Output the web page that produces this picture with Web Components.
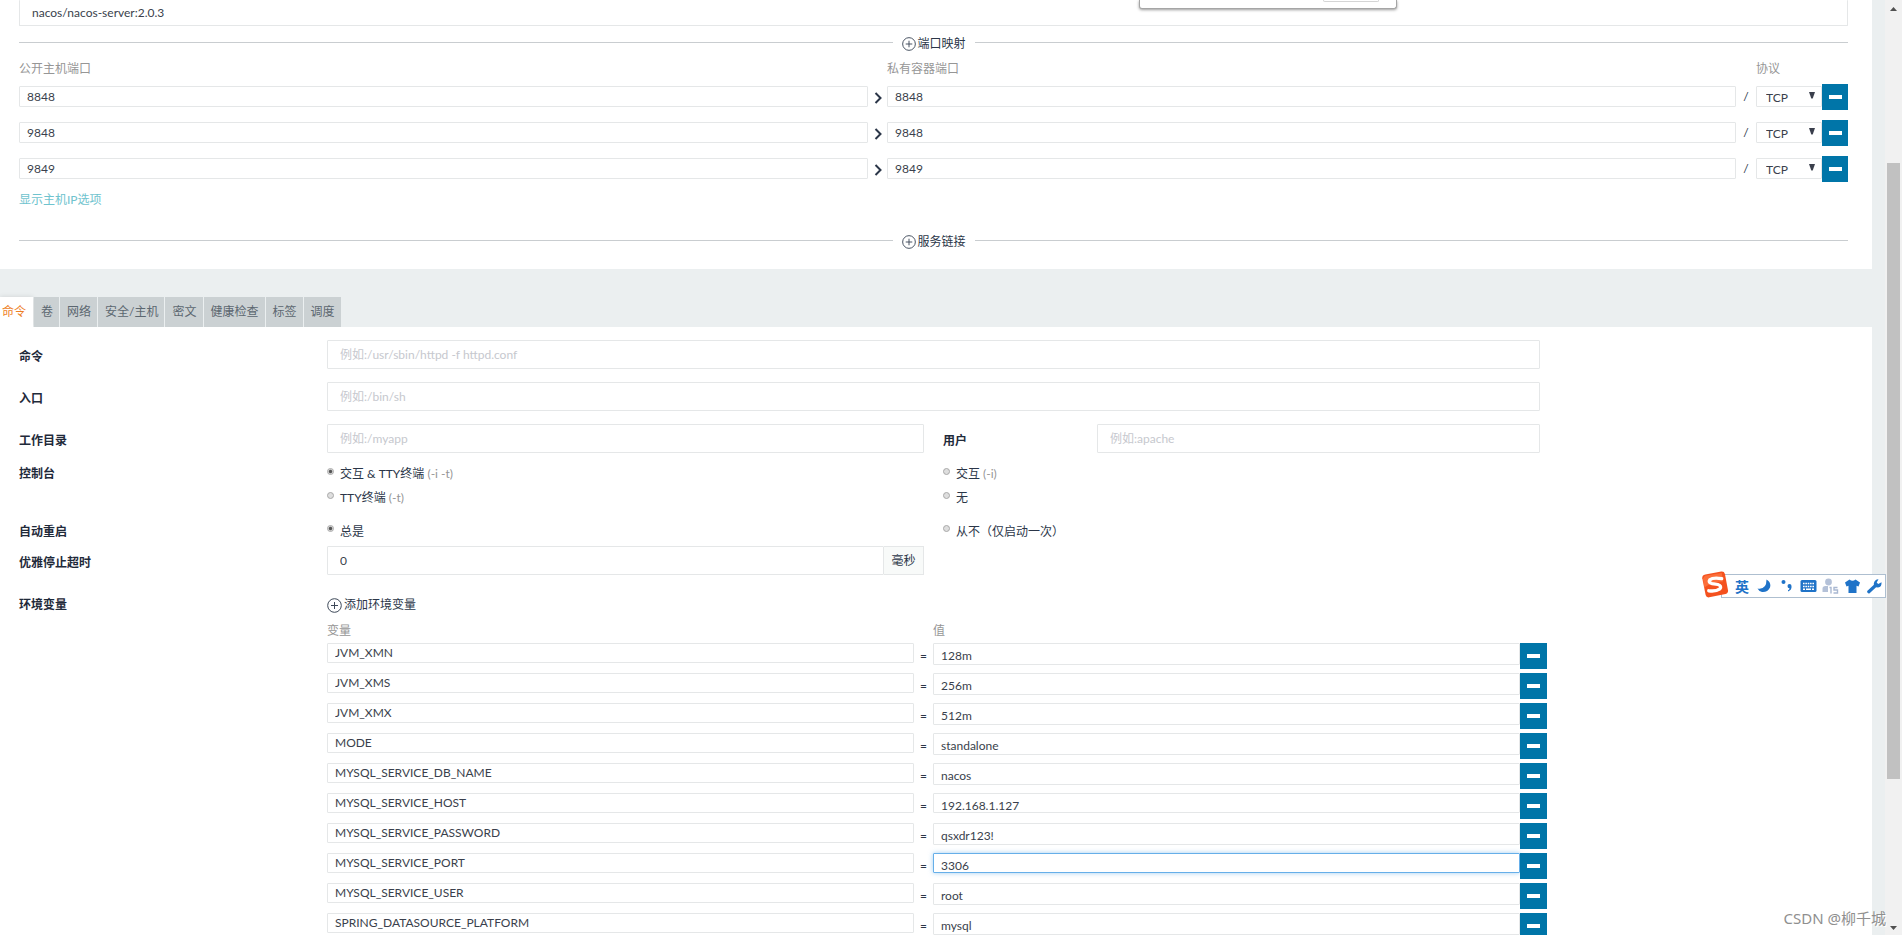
<!DOCTYPE html>
<html lang="zh-CN">
<head>
<meta charset="utf-8">
<title>nacos-server</title>
<style>
  html, body { margin: 0; height: 100%; }
  body {
    overflow: hidden;
    background: #ebeff0;
    color: #2b3648;
    font: 12px/18px Lato, "Noto Sans CJK SC", sans-serif;
    --line: #e5e7e8;
    --muted: #969696;
    --primary: #0075a8;
  }
</style>
</head>
<body>
<app-page></app-page>
<script>
const base = `
  *, *::before, *::after { box-sizing: border-box; }
  :host { display: block; box-sizing: border-box; }
  :host([hidden]) { display: none; }
  input, textarea, select, button { font: inherit; color: inherit; margin: 0; border-radius: 0; outline: none; }
  input[type=text], textarea {
    display: block; width: 100%; min-width: 0; background: #fff;
    border: 1px solid var(--line); border-radius: 1px; color: #3a3f4c; resize: none; overflow: hidden;
  }
  ::placeholder { color: #c6c8ce; opacity: 1; }
`;

function define(name, css, html, setup) {
  const tpl = document.createElement('template');
  customElements.define(name, class extends HTMLElement {
    constructor() {
      super();
      this.attachShadow({ mode: 'open' });
    }
    connectedCallback() {
      if (this.shadowRoot.childNodes.length) return;
      tpl.innerHTML = `<style>${base}${css}</style>${typeof html === 'function' ? html(this) : html}`;
      this.shadowRoot.append(tpl.content.cloneNode(true));
      if (setup) setup(this, this.shadowRoot);
    }
  });
}

/* Circled plus with a caption, used to add an entry */
define('add-button', `
  :host { display: inline-flex; }
  button { display: flex; align-items: center; gap: 2px; padding: 0; border: 0; background: none; line-height: 18px; white-space: nowrap; }
  svg { width: var(--icon, 14px); height: var(--icon, 14px); display: block; }
`, `
  <button type="button">
    <svg viewBox="0 0 15 15" fill="none" stroke="#3d4858" aria-hidden="true"><circle cx="7.5" cy="7.5" r="6.8"/><path d="M7.5 4v7M4 7.5h7"/></svg>
    <span><slot></slot></span>
  </button>`);

define('remove-button', `
  button { display: grid; place-items: center; width: 100%; height: 26px; padding: 0; border: 0; background: var(--primary); }
  svg { display: block; width: 13px; height: 4px; }
`, `<button type="button" aria-label="删除"><svg viewBox="0 0 13 4" aria-hidden="true"><rect width="13" height="4" fill="#fff"/></svg></button>`);

define('section-divider', `
  :host { display: flex; align-items: center; gap: 9px; height: 18px; }
  i { flex: 1; height: 1px; background: #c9cdd0; }
  add-button { padding-top: 3px; }
`, `<i></i><add-button><slot></slot></add-button><i></i>`);

/* Public port, private port and protocol */
define('port-row', `
  :host { display: grid; grid-template-columns: 1fr 19px 1fr 20px 66px 26px; height: 26px; }
  input[type=text] { height: 21px; margin-top: 2px; padding: 0 7px; }
  .mark { display: grid; place-items: center; }
  .mark svg { display: block; width: 10px; height: 14px; }
  .chevron { padding-top: 2px; }
  .slash { height: 25px; }
  .proto { position: relative; height: 21px; margin-top: 2px; }
  select {
    appearance: none; display: block; width: 100%; height: 21px; padding: 2px 9px 4px;
    background: #fff; border: 1px solid var(--line); border-radius: 1px; color: #3a3f4c; line-height: 18px;
  }
  .proto svg { position: absolute; right: 7px; top: 6px; width: 6px; height: 7px; pointer-events: none; }
`, host => `
  <input type="text" aria-label="公开主机端口" value="${host.getAttribute('public')}">
  <span class="mark chevron"><svg viewBox="0 0 10 14" fill="none" stroke="#2b3648" stroke-width="2" aria-hidden="true"><path d="M2.5 2l5 5-5 5"/></svg></span>
  <input type="text" aria-label="私有容器端口" value="${host.getAttribute('private')}">
  <span class="mark slash">/</span>
  <span class="proto">
    <select aria-label="协议"><option>TCP</option><option>UDP</option></select>
    <svg viewBox="0 0 6 7" aria-hidden="true"><path d="M0 0h6L3.700 6.500H2.300z" fill="#3a3f4c"/></svg>
  </span>
  <remove-button></remove-button>`);

define('port-panel', `
  :host { background: #fff; padding: 0 24px 20px 19px; }
  .image { height: 26px; padding: 0 12px; border-top: 0 !important; }
  .first { margin-top: 7px; }
  .heads { display: grid; grid-template-columns: 1fr 19px 1fr 20px 92px; margin-top: 9px; color: var(--muted); }
  .heads span:nth-child(2) { grid-column: 3; }
  .heads span:nth-child(3) { grid-column: 5; }
  .rows { display: flex; flex-direction: column; gap: 10px; margin-top: 6px; }
  a { display: block; width: max-content; margin-top: 9px; color: #6fc3ce; text-decoration: none; }
  .last { margin-top: 22px; }
`, `
  <input class="image" type="text" aria-label="镜像" value="nacos/nacos-server:2.0.3">
  <section-divider class="first">端口映射</section-divider>
  <div class="heads"><span>公开主机端口</span><span>私有容器端口</span><span>协议</span></div>
  <div class="rows">
    <port-row public="8848" private="8848"></port-row>
    <port-row public="9848" private="9848"></port-row>
    <port-row public="9849" private="9849"></port-row>
  </div>
  <a href="#host-ip">显示主机IP选项</a>
  <section-divider class="last">服务链接</section-divider>`);

define('tab-bar', `
  :host { display: flex; gap: 1px; height: 30px; }
  button { height: 30px; padding: 0 6px 0 7px; border: 0; background: #cbd1d3; color: #5c6770; white-space: nowrap; }
  button[aria-selected=true] { background: #fff; color: #ee7e24; padding: 0 7px 0 2px; box-shadow: 0 0 5px rgba(0,0,0,.12); }
`, host => host.getAttribute('tabs').split(',').map((t, i) =>
    `<button type="button" role="tab" aria-selected="${i === 0}">${t}</button>`).join(''));

/* Twelve-column row */
define('form-row', `
  :host { display: grid; grid-template-columns: repeat(12, minmax(0, 1fr)); column-gap: 19px; }
`, `<slot></slot>`);

define('env-row', `
  :host { display: grid; grid-template-columns: 1fr 19px 1fr 27px; height: 26px; }
  input[type=text] { height: 20px; padding: 0 7px 2px; }
  textarea { height: 22px; padding: 3px 7px 0; line-height: 18px; white-space: pre; }
  :host([short]) textarea { height: 20px; }
  :host([active]) textarea { border-color: #66afe9; box-shadow: 0 0 5px rgba(102,175,233,.6); }
  span { text-align: center; line-height: 25px; }
`, host => `
  <input type="text" aria-label="变量" value="${host.getAttribute('name')}">
  <span>=</span>
  <textarea rows="1" aria-label="值">${host.getAttribute('value')}</textarea>
  <remove-button></remove-button>`);

define('command-form', `
  :host { background: #fff; padding: 13px 24px 0 19px; }
  input[type=text] { height: 29px; padding: 0 12px; }
  .title { grid-column: 1 / span 2; padding-top: 8px; font-weight: 700; color: #1f2a3a; }
  .c8 { grid-column: 3 / span 8; }
  .a4 { grid-column: 3 / span 4; }
  .b4 { grid-column: 7 / span 4; }
  .b1 { grid-column: 7 / span 1; }
  .b3 { grid-column: 8 / span 3; }
  .fields { display: flex; flex-direction: column; gap: 13px; }
  .radios { margin-top: 9px; }
  .radios .title { padding-top: 3px; }
  .radios label { display: flex; align-items: flex-start; height: 24px; gap: 6px; padding-top: 3px; }
  .radios small { font-size: 12px; color: var(--muted); }
  .restart .title, .restart label { padding-top: 4px; }
  input[type=radio] {
    appearance: none; flex: none; width: 7px; height: 7px; margin-top: 3px;
    border: 1px solid #a9a9a9; border-radius: 50%; background: #dedede;
  }
  input[type=radio]:checked { background: radial-gradient(circle closest-side, #555 50%, #dedede 90%); }
  .restart input[type=radio] { margin-top: 2px; }
  .stop { margin-top: 3px; }
  .group { display: flex; }
  .group span { flex: none; width: 40px; border: 1px solid var(--line); border-left: 0; background: #f8faf9; line-height: 27px; text-align: center; }
  .env { margin-top: 21px; }
  .env .title { padding-top: 0; }
  .env add-button { --icon: 15px; display: flex; height: 18px; }
  .list { margin-right: -7px; }
  .heads { display: grid; grid-template-columns: 1fr 19px 1fr 27px; margin: 8px 0 3px; color: var(--muted); }
  .heads span + span { grid-column: 3; }
  .rows { display: flex; flex-direction: column; gap: 4px; }
`, `
  <div class="fields">
    <form-row>
      <label class="title" for="cmd">命令</label>
      <input class="c8" id="cmd" type="text" placeholder="例如:/usr/sbin/httpd -f httpd.conf">
    </form-row>
    <form-row>
      <label class="title" for="entry">入口</label>
      <input class="c8" id="entry" type="text" placeholder="例如:/bin/sh">
    </form-row>
    <form-row>
      <label class="title" for="dir">工作目录</label>
      <input class="a4" id="dir" type="text" placeholder="例如:/myapp">
      <label class="title b1" for="user">用户</label>
      <input class="b3" id="user" type="text" placeholder="例如:apache">
    </form-row>
  </div>
  <form-row class="radios">
    <span class="title">控制台</span>
    <div class="a4">
      <label><input type="radio" name="console" checked><span>交互 &amp; TTY终端 <small>(-i -t)</small></span></label>
      <label><input type="radio" name="console"><span>TTY终端 <small>(-t)</small></span></label>
    </div>
    <div class="b4">
      <label><input type="radio" name="console"><span>交互 <small>(-i)</small></span></label>
      <label><input type="radio" name="console"><span>无</span></label>
    </div>
  </form-row>
  <form-row class="radios restart">
    <span class="title">自动重启</span>
    <label class="a4"><input type="radio" name="restart" checked><span>总是</span></label>
    <label class="b4"><input type="radio" name="restart"><span>从不（仅启动一次）</span></label>
  </form-row>
  <form-row class="stop">
    <label class="title" for="timeout">优雅停止超时</label>
    <div class="a4 group"><input id="timeout" type="text" value="0"><span>毫秒</span></div>
  </form-row>
  <form-row class="env">
    <span class="title">环境变量</span>
    <div class="c8 list">
      <add-button>添加环境变量</add-button>
      <div class="heads"><span>变量</span><span>值</span></div>
      <div class="rows">
        <env-row name="JVM_XMN" value="128m"></env-row>
        <env-row name="JVM_XMS" value="256m"></env-row>
        <env-row name="JVM_XMX" value="512m"></env-row>
        <env-row name="MODE" value="standalone"></env-row>
        <env-row name="MYSQL_SERVICE_DB_NAME" value="nacos"></env-row>
        <env-row short name="MYSQL_SERVICE_HOST" value="192.168.1.127"></env-row>
        <env-row name="MYSQL_SERVICE_PASSWORD" value="qsxdr123!"></env-row>
        <env-row short active name="MYSQL_SERVICE_PORT" value="3306"></env-row>
        <env-row name="MYSQL_SERVICE_USER" value="root"></env-row>
        <env-row name="SPRING_DATASOURCE_PLATFORM" value="mysql"></env-row>
      </div>
    </div>
  </form-row>`);

define('page-scrollbar', `
  :host { display: flex; flex-direction: column; align-items: center; width: 17px; background: #f1f1f1; }
  svg { flex: none; display: block; width: 17px; height: 17px; }
  .track { flex: 1; width: 13px; display: flex; flex-direction: column; }
  .before { flex: 146; }
  .thumb { flex: 616; background: #c1c1c1; }
  .after { flex: 139; }
`, `
  <svg viewBox="0 0 17 17" aria-hidden="true"><path d="M5 11l3.5-4 3.5 4z" fill="#505050"/></svg>
  <div class="track"><div class="before"></div><div class="thumb"></div><div class="after"></div></div>
  <svg viewBox="0 0 17 17" aria-hidden="true"><path d="M5 8l3.5 4L12 8z" fill="#505050"/></svg>`);

/* Floating input-method toolbar */
define('ime-bar', `
  :host { display: flex; align-items: flex-end; width: 185px; height: 27px; }
  .logo { flex: none; width: 28px; height: 27px; position: relative; z-index: 1; }
  .bar { flex: 1; height: 24px; margin-left: -8px; padding-left: 9px; display: grid; grid-template-columns: repeat(7, 1fr); place-items: center; background: #fff; border: 1px solid #aebfd0; }
  b { color: #1f73c8; font: 700 14px/20px "Noto Sans CJK SC", sans-serif; }
  .bar svg { display: block; height: 16px; flex: none; }
`, `
  <svg class="logo" viewBox="0 0 28 28" aria-hidden="true">
    <path d="M4 3.5L20.500 .5q3-.4 3.800 2.500L27.500 20q.5 3-2.500 3.800L8 27.300q-3 .5-3.700-2.500L.8 7.500Q.4 4.300 4 3.500z" fill="#f4511e"/>
    <path d="M3.500 5L21 2l1.500 9Q12 11 3 17L1.500 8z" fill="#ff7a45" opacity=".7"/>
    <path d="M21 8Q12 6.500 8.500 9.200 6.500 12 11 13l6 1q4.500 1.500 2 4.500-4 3-11.500 2" fill="none" stroke="#fff" stroke-width="3.400" stroke-linecap="round"/>
  </svg>
  <div class="bar">
    <b>英</b>
    <svg width="14" viewBox="0 0 14 16" fill="#1f73c8"><path d="M9.500 1.500q5 3 3.500 8-2.500 5-8 4.500Q2 13.500.5 10.500q9 1.500 9-9z"/></svg>
    <svg width="11" viewBox="0 0 11 16" fill="#1f73c8"><circle cx="2.500" cy="4" r="2"/><path d="M6.500 8a2 2 0 1 1 4 0q.5 4-3.500 5.500v-1.300q1.500-.7 1.500-2Q6.500 10.200 6.500 8z"/></svg>
    <svg width="17" viewBox="0 0 17 16"><rect x=".5" y="2" width="16" height="12" rx="1.500" fill="#1f73c8"/><path d="M3 5.500h11M3 8.500h11" stroke="#fff" stroke-width="1.600" stroke-dasharray="1.600 .75"/><path d="M3 11.300h2M6 11.300h5M12 11.300h2" stroke="#fff" stroke-width="1.500"/></svg>
    <svg width="17" viewBox="0 0 17 16"><circle cx="6.500" cy="4" r="3.400" fill="#b4c1d8"/><path d="M.5 14V10.500q0-2.500 3-2.500h6q3 0 3 2.500V14z" fill="#b4c1d8"/><rect x="6" y="8" width="11" height="8" fill="#fff"/><path d="M7.500 9.500h1.500v6M15.500 9.500h-3.500v2.500h3.500v3h-4" fill="none" stroke="#a9b8d2" stroke-width="1.400"/></svg>
    <svg width="15" viewBox="0 0 15 16" fill="#1f73c8"><path d="M4.500 1.500q3 2.500 6 0L15 4.500l-1.500 4-2-.7V15h-8V7.800l-2 .7L0 4.500z"/></svg>
    <svg width="15" viewBox="0 0 15 16"><path d="M1.800 13.700L8 8" stroke="#1f73c8" stroke-width="3.200" stroke-linecap="round"/><path d="M11.500 1.300L9.700 4.500l1.500 1.500 3.300-1.700Q15 9 11 9.500 6.500 9.500 6.800 5.500 7.500 1.500 11.500 1.300z" fill="#1f73c8"/></svg>
  </div>`);

/* Lower edge of a dialog that reaches into the view */
define('dialog-edge', `
  :host { width: 258px; height: 9px; display: flex; justify-content: flex-end; padding-right: 17px; background: #fff; border: 1px solid #a5a5a5; border-top: 0; border-radius: 0 0 3px 3px; box-shadow: 0 1px 3px rgba(0,0,0,.4); }
  i { width: 56px; height: 2px; border: 1px solid #d5d5d5; border-top: 0; border-radius: 0 0 3px 3px; }
`, `<i></i>`);

define('app-page', `
  :host { display: flex; height: 100vh; overflow: hidden; position: relative; }
  main { flex: 1; min-width: 0; display: flex; flex-direction: column; padding-right: 13px; overflow: hidden; }
  port-panel { flex: none; margin-bottom: 28px; }
  tab-bar { flex: none; }
  command-form { flex: 1 0 auto; }
  page-scrollbar { flex: none; }
  dialog-edge { position: absolute; left: 1139px; top: 0; }
  ime-bar { position: absolute; right: 16px; top: 571px; }
  .credit { position: absolute; right: 16px; bottom: 6px; font: 15px/22px "Noto Sans", "Noto Sans CJK SC", sans-serif; color: #8f8f8f; text-shadow: 1px 1px 0 #fff; }
`, `
  <main>
    <port-panel></port-panel>
    <tab-bar role="tablist" tabs="命令,卷,网络,安全/主机,密文,健康检查,标签,调度"></tab-bar>
    <command-form></command-form>
  </main>
  <page-scrollbar></page-scrollbar>
  <dialog-edge></dialog-edge>
  <ime-bar></ime-bar>
  <span class="credit">CSDN @柳千城</span>`);
</script>
</body>
</html>
